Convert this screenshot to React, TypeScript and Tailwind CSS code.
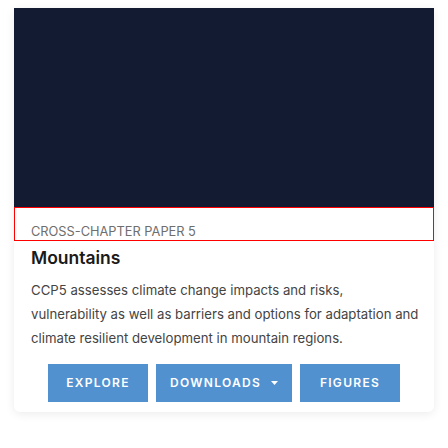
export default function App() {
  const font = { fontFamily: 'Inter, "Liberation Sans", sans-serif' };
  return (
    <div className="w-[448px] h-[448px] bg-white pt-[8px] px-[14px]" style={font}>
      <div className="bg-white rounded-b-md shadow-[0_2px_10px_rgba(0,0,0,0.08)] pb-[10px]">
        <div className="h-[199px] bg-[#121b32]" />
        <div className="h-[34px] border border-[#ff0000] flex items-end px-[16px] pb-[1px]">
          <span className="text-[12.8px] leading-[14px] text-[#6e6e6e]">CROSS-CHAPTER PAPER 5</span>
        </div>
        <div className="pl-[17px] pr-[4px]">
          <h2 className="mt-[5px] text-[17.5px] leading-[24px] font-semibold text-[#1a1a1a]">Mountains</h2>
          <p className="mt-[8px] text-[13.2px] leading-[24px] text-[#444] whitespace-nowrap">
            CCP5 assesses climate change impacts and risks,<br />
            vulnerability as well as barriers and options for adaptation and<br />
            climate resilient development in mountain regions.
          </p>
        </div>
        <div className="mt-[14px] flex justify-center gap-[8px]">
          <button className="w-[100px] h-[38px] bg-[#5291cf] text-white text-[12px] font-semibold tracking-[1.3px]">EXPLORE</button>
          <button className="w-[136px] h-[38px] bg-[#5291cf] text-white text-[12px] font-semibold tracking-[1.3px] flex items-center justify-center gap-[10px]">
            <span>DOWNLOADS</span>
            <svg width="7" height="4" viewBox="0 0 7 4"><path d="M0 0h7L3.5 4z" fill="white" /></svg>
          </button>
          <button className="w-[100px] h-[38px] bg-[#5291cf] text-white text-[12px] font-semibold tracking-[1.3px]">FIGURES</button>
        </div>
      </div>
    </div>
  );
}
